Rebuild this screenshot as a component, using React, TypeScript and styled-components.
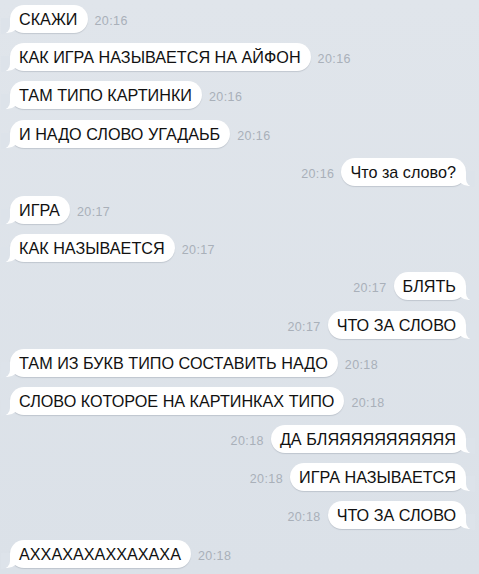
import React from "react";
import styled, { createGlobalStyle, css } from "styled-components";

type Msg = { text: string; time: string; out?: boolean };

const messages: Msg[] = [
  { text: "СКАЖИ", time: "20:16" },
  { text: "КАК ИГРА НАЗЫВАЕТСЯ НА АЙФОН", time: "20:16" },
  { text: "ТАМ ТИПО КАРТИНКИ", time: "20:16" },
  { text: "И НАДО СЛОВО УГАДАЬБ", time: "20:16" },
  { text: "Что за слово?", time: "20:16", out: true },
  { text: "ИГРА", time: "20:17" },
  { text: "КАК НАЗЫВАЕТСЯ", time: "20:17" },
  { text: "БЛЯТЬ", time: "20:17", out: true },
  { text: "ЧТО ЗА СЛОВО", time: "20:17", out: true },
  { text: "ТАМ ИЗ БУКВ ТИПО СОСТАВИТЬ НАДО", time: "20:18" },
  { text: "СЛОВО КОТОРОЕ НА КАРТИНКАХ ТИПО", time: "20:18" },
  { text: "ДА БЛЯЯЯЯЯЯЯЯЯЯЯ", time: "20:18", out: true },
  { text: "ИГРА НАЗЫВАЕТСЯ", time: "20:18", out: true },
  { text: "ЧТО ЗА СЛОВО", time: "20:18", out: true },
  { text: "АХХАХАХАХХАХАХА", time: "20:18" },
];

const BG = "#dde3ea";

const Global = createGlobalStyle`
  html, body { margin: 0; padding: 0; background: ${BG}; }
  body { font-family: "Liberation Sans", Arial, sans-serif; }
`;

const Chat = styled.div`
  width: 479px;
  height: 574px;
  overflow: hidden;
  box-sizing: border-box;
  padding: 5px 13px 0 10px;
  display: flex;
  flex-direction: column;
  gap: 10.2px;
  background: linear-gradient(#e0e5eb, #dbe1e8);
`;

const Row = styled.div<{ $out?: boolean }>`
  display: flex;
  align-items: flex-end;
  gap: 7px;
  flex-direction: ${({ $out }) => ($out ? "row-reverse" : "row")};
`;

const Bubble = styled.div<{ $out?: boolean }>`
  position: relative;
  height: 28px;
  line-height: 28px;
  padding: 0 10px 0 9px;
  border-radius: 14px;
  background: #fff;
  color: #111;
  font-size: 16.2px;
  white-space: nowrap;
  box-shadow: 0 1px 1px rgba(60, 70, 90, 0.18);

  &::before {
    content: "";
    position: absolute;
    bottom: 0;
    width: 14px;
    height: 14px;
    background: #fff;
  }
  &::after {
    content: "";
    position: absolute;
    bottom: -1px;
    width: 9px;
    height: 16px;
    background: ${BG};
  }

  ${({ $out }) =>
    $out
      ? css`
          &::before {
            right: -5px;
            border-bottom-left-radius: 12px 10px;
          }
          &::after {
            right: -9px;
            border-bottom-left-radius: 8px;
          }
        `
      : css`
          &::before {
            left: -5px;
            border-bottom-right-radius: 12px 10px;
          }
          &::after {
            left: -9px;
            border-bottom-right-radius: 8px;
          }
        `}
`;

const Text = styled.span`
  position: relative;
  z-index: 1;
`;

const Time = styled.span`
  font-size: 12.5px;
  letter-spacing: 0.4px;
  color: #a9b0b9;
  margin-bottom: 5px;
`;

export default function App() {
  return (
    <>
      <Global />
      <Chat>
        {messages.map((m, i) => (
          <Row key={i} $out={m.out}>
            <Bubble $out={m.out}>
              <Text>{m.text}</Text>
            </Bubble>
            <Time>{m.time}</Time>
          </Row>
        ))}
      </Chat>
    </>
  );
}
